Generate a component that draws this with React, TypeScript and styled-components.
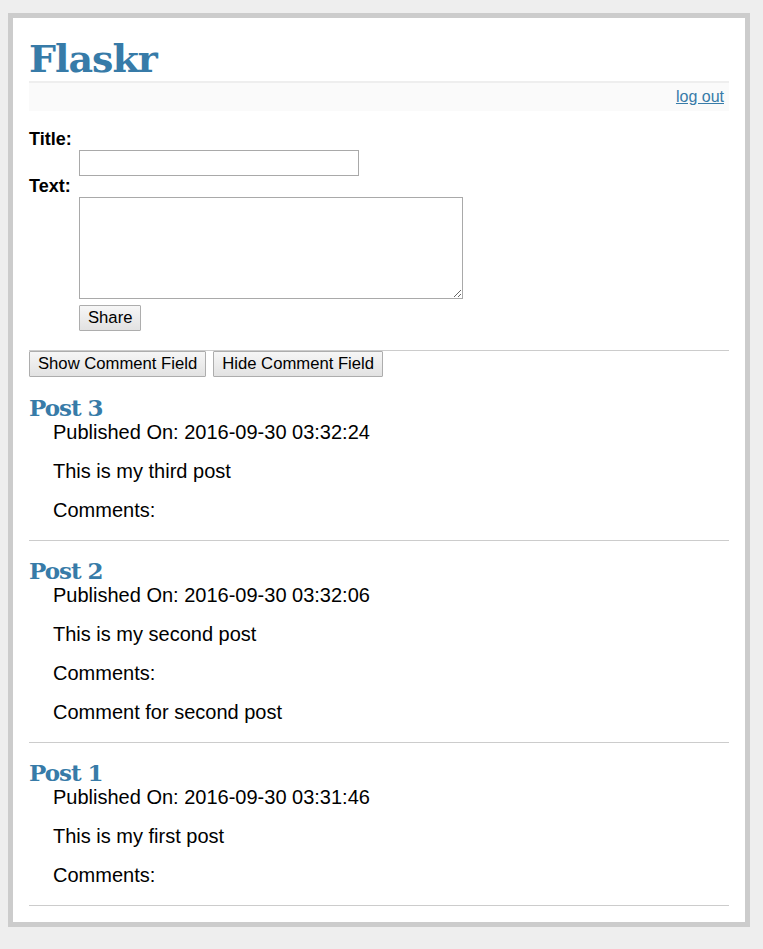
import styled, { createGlobalStyle } from "styled-components";

type Entry = {
    title: string;
    published: string;
    text: string;
    comments: string[];
}

const entries: Entry[] = [
    {
        title: 'Post 3',
        published: '2016-09-30 03:32:24',
        text: 'This is my third post',
        comments: []
    }, {
        title: 'Post 2',
        published: '2016-09-30 03:32:06',
        text: 'This is my second post',
        comments: ['Comment for second post']
    }, {
        title: 'Post 1',
        published: '2016-09-30 03:31:46',
        text: 'This is my first post',
        comments: []
    }
]

export default function App() {
    return (
        <>
            <GlobalStyle />
            <Page>
                <Title>Flaskr</Title>
                <MetaNav>
                    <Link href="#">log out</Link>
                </MetaNav>
                <AddEntry onSubmit={(e) => e.preventDefault()}>
                    <Fields>
                        <Label>Title:</Label>
                        <Field>
                            <TextInput type="text" name="title" />
                        </Field>
                        <Label>Text:</Label>
                        <Field $gap={6}>
                            <TextArea name="text" />
                        </Field>
                        <Field>
                            <Button type="submit">Share</Button>
                        </Field>
                    </Fields>
                </AddEntry>
                <Toolbar>
                    <Button type="button">Show Comment Field</Button>
                    <Button type="button">Hide Comment Field</Button>
                </Toolbar>
                <Entries>
                    {
                        entries.map((entry) => (
                            <EntryItem key={entry.title}>
                                <EntryTitle>{entry.title}</EntryTitle>
                                <div>Published On: {entry.published}</div>
                                <Para>{entry.text}</Para>
                                <Para>Comments:</Para>
                                {
                                    entry.comments.map((c, i) => (
                                        <Para key={i}>{c}</Para>
                                    ))
                                }
                            </EntryItem>
                        ))
                    }
                </Entries>
            </Page>
        </>
    )
}

const GlobalStyle = createGlobalStyle`
    html, body{
        margin: 0;
        background: #eee;
    }
    body{
        font-family: "Liberation Sans", Arial, sans-serif;
        font-size: 20px;
        color: #000;
    }
`

const Page = styled.div`
    width: 700px;
    margin: 13px 0 22px 8px;
    padding: 16px;
    border: 5px solid #ccc;
    background: #fff;
`

const Title = styled.h1`
    margin: 0;
    padding-top: 2px;
    font-family: "DejaVu Serif", Georgia, serif;
    font-weight: bold;
    font-size: 38px;
    letter-spacing: -1px;
    line-height: 45px;
    color: #377ba8;
    border-bottom: 2px solid #eee;
`

const MetaNav = styled.div`
    text-align: right;
    font-size: 16px;
    line-height: 18px;
    padding: 5px;
    margin-bottom: 18px;
    background: #fafafa;
`

const Link = styled.a`
    color: #377ba8;
    text-decoration: underline;
`

const AddEntry = styled.form`
    font-size: 18px;
    border-bottom: 1px solid #ccc;
`

const Fields = styled.dl`
    margin: 0 0 19px;
    font-weight: bold;
`

const Label = styled.dt`
    line-height: 21px;
`

const Field = styled.dd<{ $gap?: number }>`
    margin: 0 0 ${(p) => p.$gap ?? 0}px 50px;
    font-weight: normal;
`

const TextInput = styled.input`
    display: block;
    box-sizing: border-box;
    width: 280px;
    height: 26px;
    margin: 0;
    border: 1px solid #a9a9a9;
    padding: 1px 3px;
    font: 16px "Liberation Sans", Arial, sans-serif;
`

const TextArea = styled.textarea`
    display: block;
    box-sizing: border-box;
    width: 384px;
    height: 102px;
    margin: 0;
    border: 1px solid #a9a9a9;
    padding: 2px;
    font: 16px "Liberation Mono", monospace;
`

const Button = styled.button`
    box-sizing: border-box;
    height: 26px;
    margin: 0;
    padding: 0 8px;
    font: 16.67px "Liberation Sans", Arial, sans-serif;
    color: #000;
    border: 1px solid #adadad;
    border-radius: 1px;
    background: linear-gradient(#f6f6f6, #e2e2e2);
    cursor: pointer;
`

const Toolbar = styled.div`
    display: flex;
    gap: 7px;
`

const Entries = styled.ul`
    list-style: none;
    margin: 1px 0 0;
    padding: 0;
`

const EntryItem = styled.li`
    padding: 16px 24px 18px;
    border-bottom: 1px solid #ccc;
`

const EntryTitle = styled.h2`
    margin: 0 0 0 -24px;
    font-family: "DejaVu Serif", Georgia, serif;
    font-weight: bold;
    font-size: 23px;
    letter-spacing: -1px;
    line-height: 27px;
    color: #377ba8;
`

const Para = styled.p`
    margin: 16px 0 0;
`
